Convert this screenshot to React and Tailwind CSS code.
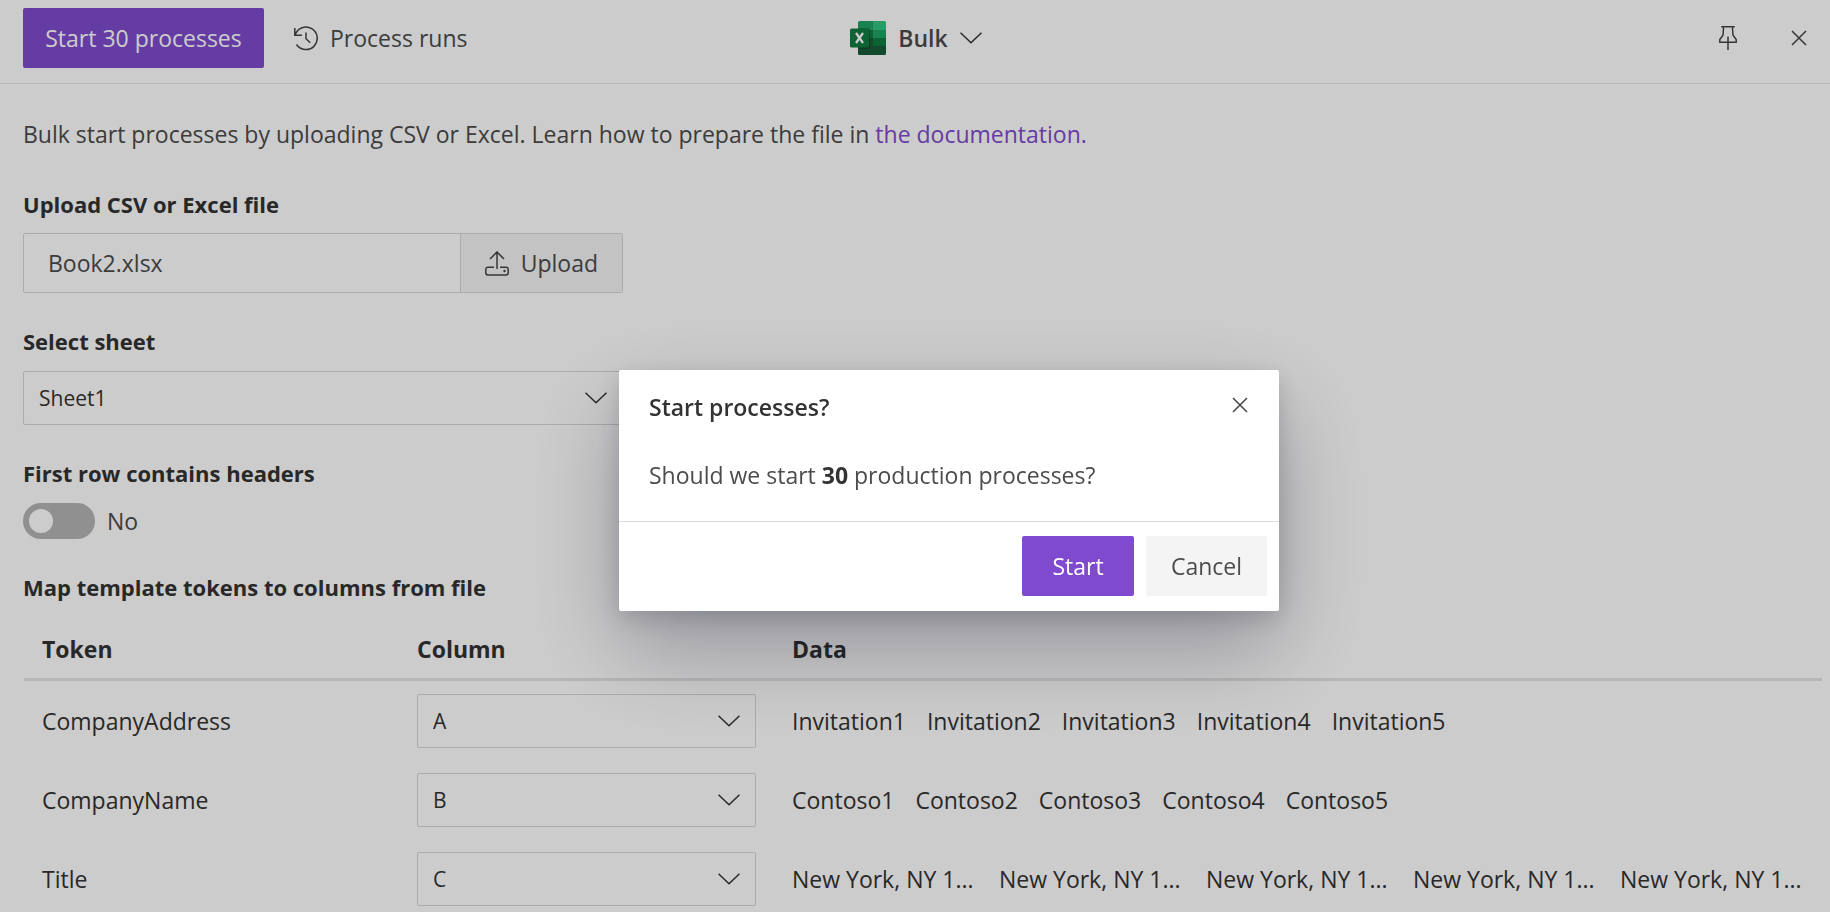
import { useState } from "react";

const rows = [
  {
    token: "CompanyAddress",
    column: "A",
    data: ["Invitation1", "Invitation2", "Invitation3", "Invitation4", "Invitation5"],
  },
  {
    token: "CompanyName",
    column: "B",
    data: ["Contoso1", "Contoso2", "Contoso3", "Contoso4", "Contoso5"],
  },
  {
    token: "Title",
    column: "C",
    data: [
      "New York, NY 10001",
      "New York, NY 10002",
      "New York, NY 10003",
      "New York, NY 10004",
      "New York, NY 10005",
    ],
  },
];

// long cell values are cut so five of them fit in a row
const shorten = (text) => (text.length > 14 ? text.slice(0, 14) + "..." : text);

export default function App() {
  const [open, setOpen] = useState(true);

  return (
    <div className="h-screen overflow-hidden bg-white font-['Open_Sans','Noto_Sans',sans-serif] text-[23px] leading-8 text-[#4c4c4c]">
      <Header onStart={() => setOpen(true)} />
      <main className="pt-[34px] pl-[23px] pr-2">
        <p>
          Bulk start processes by uploading CSV or Excel. Learn how to prepare the file in{" "}
          <a href="#docs" className="text-[#7f4ace]">the documentation.</a>
        </p>
        <UploadField />
        <SheetField />
        <HeadersToggle />
        <h2 className="mt-8 font-bold text-[22px] text-[#333]">Map template tokens to columns from file</h2>
        <TokenTable />
      </main>
      {open && <ConfirmDialog onClose={() => setOpen(false)} />}
    </div>
  );
}

function Header({ onStart }) {
  return (
    <header className="grid grid-cols-[1fr_auto_1fr] items-start h-[84px] pt-2 pl-[23px] pr-[21px] border-b border-[#eaeaea]">
      <div className="flex items-center">
        <button onClick={onStart} className="h-[60px] w-[241px] rounded-xs bg-[#7f4ace] text-white whitespace-nowrap">
          Start 30 processes
        </button>
        <button className="flex items-center gap-3 h-[60px] ml-[30px] whitespace-nowrap">
          <HistoryIcon />
          Process runs
        </button>
      </div>
      <button className="flex items-center h-[60px] font-semibold">
        <ExcelIcon />
        <span className="mx-3">Bulk</span>
        <ChevronIcon />
      </button>
      <div className="flex items-center justify-end h-[60px] gap-[51px]">
        <button aria-label="Pin"><PinIcon /></button>
        <button aria-label="Close"><CloseIcon /></button>
      </div>
    </header>
  );
}

function UploadField() {
  return (
    <div className="mt-[38px]">
      <label htmlFor="file" className="block font-bold text-[22px] text-[#333]">Upload CSV or Excel file</label>
      <div className="flex w-[600px] h-[60px] mt-[13px] border border-[#d6d6d6] rounded-xs">
        <input id="file" readOnly value="Book2.xlsx" className="flex-1 min-w-0 px-6 outline-none" />
        <button className="flex items-center gap-3 px-6 bg-[#f4f4f4] border-l border-[#d6d6d6]">
          <UploadIcon />
          Upload
        </button>
      </div>
    </div>
  );
}

function SheetField() {
  return (
    <div className="mt-8">
      <label htmlFor="sheet" className="block font-bold text-[22px] text-[#333]">Select sheet</label>
      <div className="w-[600px] mt-[14px]">
        <Dropdown id="sheet" value="Sheet1" options={["Sheet1", "Sheet2"]} />
      </div>
    </div>
  );
}

function HeadersToggle() {
  const [checked, setChecked] = useState(false);

  return (
    <div className="mt-8">
      <label htmlFor="headers" className="block font-bold text-[22px] text-[#333]">First row contains headers</label>
      <div className="flex items-center gap-3 mt-[14px]">
        <input
          id="headers"
          type="checkbox"
          role="switch"
          checked={checked}
          onChange={(e) => setChecked(e.target.checked)}
          className="appearance-none w-[72px] h-9 rounded-full bg-[#b5b5b5] checked:bg-[#7f4ace] before:block before:size-6 before:mt-1.5 before:ml-1.5 checked:before:ml-[42px] before:rounded-full before:bg-white"
        />
        <span>{checked ? "Yes" : "No"}</span>
      </div>
    </div>
  );
}

function Dropdown({ id, label, value, options }) {
  return (
    <div className="grid items-center text-[#333]">
      <select
        id={id}
        aria-label={label}
        defaultValue={value}
        className="appearance-none col-start-1 row-start-1 w-full h-[54px] px-[15px] border border-[#d6d6d6] rounded-xs text-[21px]"
      >
        {options.map((option) => (
          <option key={option}>{option}</option>
        ))}
      </select>
      <span className="col-start-1 row-start-1 justify-self-end mr-4 pointer-events-none">
        <ChevronIcon />
      </span>
    </div>
  );
}

function TokenTable() {
  return (
    <div className="mt-[26px] pl-px">
      <table className="w-full table-fixed border-separate border-spacing-0 text-left text-[#333]">
        <thead>
          <tr>
            <th className="w-[375px] px-[18px] pt-1 pb-[13px] border-b-3 border-[#e4e4e4] font-bold">Token</th>
            <th className="w-[375px] px-[18px] pt-1 pb-[13px] border-b-3 border-[#e4e4e4] font-bold">Column</th>
            <th className="px-[18px] pt-1 pb-[13px] border-b-3 border-[#e4e4e4] font-bold">Data</th>
          </tr>
        </thead>
        <tbody>
          {rows.map((row) => (
            <tr key={row.token} className="h-[79px]">
              <td className="px-[18px]">{row.token}</td>
              <td className="px-[18px]">
                <Dropdown label={row.token} value={row.column} options={["A", "B", "C"]} />
              </td>
              <td className="pl-[18px]">
                <div className="flex gap-[21px]">
                  {row.data.map((item) => (
                    <span key={item} className={item.length > 14 ? "w-[186px] whitespace-nowrap" : ""}>
                      {shorten(item)}
                    </span>
                  ))}
                </div>
              </td>
            </tr>
          ))}
        </tbody>
      </table>
    </div>
  );
}

function ConfirmDialog({ onClose }) {
  return (
    <div className="fixed inset-0 flex items-center justify-center pt-[68px] pl-[68px] bg-black/20">
      <div
        role="dialog"
        aria-modal="true"
        aria-labelledby="dialog-title"
        className="w-[660px] rounded-xs bg-white shadow-[0_38px_90px_rgba(0,0,30,0.28),0_7px_24px_rgba(0,0,30,0.16)]"
      >
        <div className="flex items-start justify-between pt-[21px] pl-[30px] pr-[29px]">
          <h1 id="dialog-title" className="font-semibold text-[#333]">Start processes?</h1>
          <button onClick={onClose} aria-label="Close dialog" className="pt-1"><CloseIcon /></button>
        </div>
        <p className="pt-9 pb-[30px] px-[30px]">
          Should we start <b className="text-[#333]">30</b> production processes?
        </p>
        <div className="flex justify-end gap-3 pt-[14px] pb-[15px] pr-3 border-t border-[#dcdcdc]">
          <button onClick={onClose} className="h-[60px] w-28 rounded-xs bg-[#7f4ace] text-white">Start</button>
          <button onClick={onClose} className="h-[60px] w-[121px] rounded-xs bg-[#f4f4f4]">Cancel</button>
        </div>
      </div>
    </div>
  );
}

function ChevronIcon() {
  return (
    <svg width="22" height="12" viewBox="0 0 22 12" fill="none" stroke="#333" strokeWidth="1.5">
      <path d="M0.5 0.8 11 10.8 21.5 0.8" />
    </svg>
  );
}

function CloseIcon() {
  return (
    <svg width="20" height="20" viewBox="0 0 20 20" fill="none" stroke="#444" strokeWidth="1.5">
      <path d="M3 3l14 14M17 3L3 17" />
    </svg>
  );
}

function PinIcon() {
  return (
    <svg width="20" height="26" viewBox="0 0 20 26" fill="none" stroke="#444" strokeWidth="1.5">
      <path d="M3.2 1.8h13.6M5.6 1.8 5 10.2 1.8 14.5v2.7h16.4v-2.7L15 10.2l-.6-8.4M10 11.5V25" />
    </svg>
  );
}

function HistoryIcon() {
  return (
    <svg width="24" height="25" viewBox="0 0 24 25" fill="none" stroke="#444" strokeWidth="1.5">
      <path d="M0.8 2v7.2H8M1.2 8.8A11.3 11.3 0 1 1 2.5 18.5M12 6.5v6.3l4.2 4" />
    </svg>
  );
}

function UploadIcon() {
  return (
    <svg width="24" height="25" viewBox="0 0 24 25" fill="none" stroke="#444" strokeWidth="1.5">
      <path d="M12 18V1.2M5 8l7-7 7 7M9 16.2H3a2.2 2.2 0 0 0-2.2 2.2v3.4A2.2 2.2 0 0 0 3 24h18a2.2 2.2 0 0 0 2.2-2.2v-3.4a2.2 2.2 0 0 0-2.2-2.2h-6" />
      <circle cx="19.5" cy="20" r="1.2" fill="#444" stroke="none" />
    </svg>
  );
}

function ExcelIcon() {
  return (
    <svg width="36" height="34" viewBox="0 0 36 34">
      <path fill="#21a366" d="M8 1.5A1.5 1.5 0 0 1 9.5 0H23v9H8z" />
      <path fill="#33c481" d="M23 0h11.5A1.5 1.5 0 0 1 36 1.5V9H23z" />
      <path fill="#107c41" d="M8 9h15v16H8z" />
      <path fill="#21a366" d="M23 9h13v8H23z" />
      <path fill="#107c41" d="M23 17h13v8H23z" />
      <path fill="#185c37" d="M8 17h15v8h13v7.5a1.5 1.5 0 0 1-1.5 1.5h-25A1.5 1.5 0 0 1 8 32.5z" />
      <path fill="#000" opacity=".2" d="M8 7h10a2 2 0 0 1 2 2v17a2 2 0 0 1-2 2H8z" />
      <rect width="19" height="19" y="7.5" rx="1.5" fill="#107c41" />
      <path stroke="#fff" strokeWidth="2.2" d="M6 12l7 10M13 12l-7 10" />
    </svg>
  );
}
